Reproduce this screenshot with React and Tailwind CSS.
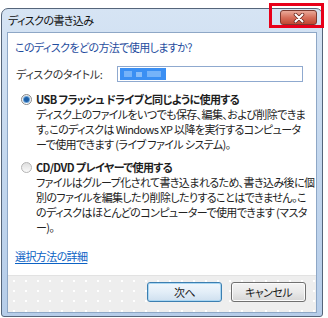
export default function App() {
  return (
    <div className="relative w-[328px] h-[318px] bg-white overflow-hidden font-['Noto_Sans_CJK_JP','Noto_Sans',sans-serif] [font-feature-settings:'palt'_1] text-[11px] tracking-[-0.6px] text-[#1e1e1e]">
      {/* Window frame */}
      <div className="absolute left-[1px] top-[8px] w-[322px] h-[309px] rounded-t-[7px] rounded-b-[3px] border border-[#55657a] bg-gradient-to-b from-[#d6e4f4] via-[#c3d7ee] to-[#b6cde9] flex flex-col">
        {/* Title bar */}
        <div className="h-[23px] flex items-center pl-[6px] shrink-0">
          <span className="leading-none text-[#111]">ディスクの書き込み</span>
        </div>

        {/* Content panel */}
        <div className="mx-[5px] mb-[3px] flex-1 border border-[#8ea7c6] bg-white flex flex-col">
          <div className="flex-1 px-[7px] pt-[7px]">
            <div className="leading-[15px] text-[#1f4d9e]">このディスクをどの方法で使用しますか?</div>

            {/* Title row */}
            <div className="mt-[11px] flex items-center h-[16px]">
              <span className="w-[95px] pl-[1px] leading-none text-[#333] tracking-[-0.3px]">ディスクのタイトル:</span>
              <div className="ml-[7px] w-[186px] h-[16px] border border-[#8fa9cf] bg-white flex items-center px-[2px]">
                <div className="relative w-[46px] h-[12px] bg-[#3a8ff3]">
                  <div className="absolute left-[4px] top-[3px] w-[8px] h-[6px] bg-[#8fc2fb] opacity-70" />
                  <div className="absolute left-[16px] top-[4px] w-[6px] h-[5px] bg-[#a9d0fb] opacity-70" />
                  <div className="absolute left-[27px] top-[3px] w-[14px] h-[6px] bg-[#8fc2fb] opacity-70" />
                </div>
              </div>
            </div>

            {/* Option 1 */}
            <div className="mt-[10px]">
              <div className="flex items-center h-[15px]">
                <div className="ml-[6px] w-[11px] h-[11px] rounded-full border border-[#8a8a8a] bg-gradient-to-b from-[#e8e8e8] to-[#ffffff] flex items-center justify-center">
                  <div className="w-[5px] h-[5px] rounded-full bg-[#1d5fa8] ring-1 ring-[#6aa3d8]" />
                </div>
                <span className="ml-[4px] font-bold leading-none">USB フラッシュ ドライブと同じように使用する</span>
              </div>
              <div className="pl-[21px] leading-[15px] text-[#222] whitespace-nowrap">
                <div>ディスク上のファイルをいつでも保存、編集、および削除できま</div>
                <div>す。このディスクは Windows XP 以降を実行するコンピュータ</div>
                <div>ーで使用できます (ライブ ファイル システム)。</div>
              </div>
            </div>

            {/* Option 2 */}
            <div className="mt-[8px]">
              <div className="flex items-center h-[15px]">
                <div className="ml-[6px] w-[11px] h-[11px] rounded-full border border-[#b4b4b4] bg-gradient-to-b from-[#dedede] to-[#fafafa]" />
                <span className="ml-[4px] font-bold leading-none">CD/DVD プレイヤーで使用する</span>
              </div>
              <div className="pl-[21px] leading-[15px] text-[#222] whitespace-nowrap">
                <div>ファイルはグループ化されて書き込まれるため、書き込み後に個</div>
                <div>別のファイルを編集したり削除したりすることはできません。こ</div>
                <div>のディスクはほとんどのコンピューターで使用できます (マスタ</div>
                <div>ー)。</div>
              </div>
            </div>

            <div className="mt-[14px] leading-[15px]">
              <span className="text-[#0b62c4] underline underline-offset-2">選択方法の詳細</span>
            </div>
          </div>

          {/* Footer */}
          <div className="h-[37px] shrink-0 border-t border-[#e2e2e2] bg-[#eeeeee] [background-image:radial-gradient(#ffffff_0.8px,transparent_1.2px)] [background-size:12px_10px] flex items-start justify-end gap-[9px] pt-[6px] pr-[10px]">
            <button className="w-[75px] h-[20px] rounded-[3px] border border-[#3c7fb1] bg-gradient-to-b from-[#f1f7fc] via-[#e3eef8] to-[#cfe0ef] leading-none text-[#1b1b1b] shadow-[inset_0_0_0_1px_#a9d6f2]">
              次へ
            </button>
            <button className="w-[75px] h-[20px] rounded-[3px] border border-[#707070] bg-gradient-to-b from-[#f3f3f3] via-[#e9e9e9] to-[#d6d6d6] leading-none text-[#1b1b1b] shadow-[inset_0_0_0_1px_#fbfbfb]">
              キャンセル
            </button>
          </div>
        </div>
      </div>

      {/* Close button */}
      <div className="absolute left-[280px] top-[10px] w-[37px] h-[15px] rounded-[3px] border border-[#7b3a30] bg-gradient-to-b from-[#e9a99a] via-[#d6705c] to-[#c2452f] flex items-center justify-center">
        <svg width="12" height="10" viewBox="0 0 12 10">
          <path d="M2.5 1.5 L9.5 8.5 M9.5 1.5 L2.5 8.5" stroke="#6e2a20" strokeWidth="3.6" strokeLinecap="round" />
          <path d="M2.5 1.5 L9.5 8.5 M9.5 1.5 L2.5 8.5" stroke="#ffffff" strokeWidth="2" strokeLinecap="round" />
        </svg>
      </div>

      {/* Red annotation box */}
      <div className="absolute left-[269px] top-[3px] w-[55px] h-[25px] border-[3px] border-[#e8001a]" />
    </div>
  )
}
